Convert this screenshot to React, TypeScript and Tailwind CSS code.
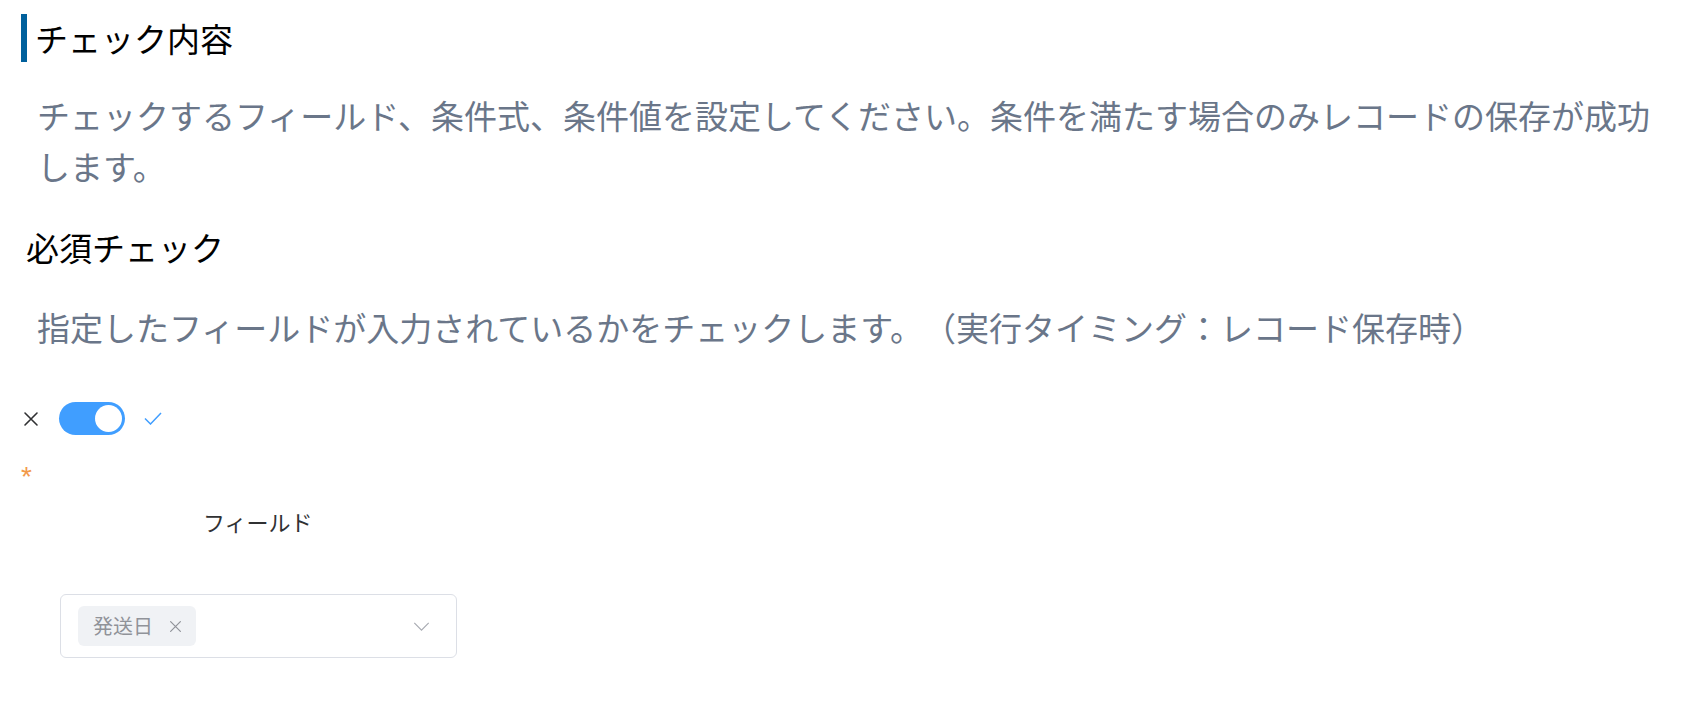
import React from "react";

const jp = { fontFamily: '"Noto Sans CJK JP", "Noto Sans", sans-serif' };

function CloseIcon({ className, width = 1.4 }: { className?: string; width?: number }) {
  return (
    <svg viewBox="0 0 16 16" className={className} fill="none" stroke="currentColor" strokeWidth={width} strokeLinecap="round">
      <path d="M2 2 L14 14 M14 2 L2 14" />
    </svg>
  );
}

function Toggle() {
  return (
    <div className="flex items-center h-[33px]">
      <CloseIcon className="w-[16px] h-[16px] ml-[2px] text-[#303133]" width={1.6} />
      <button className="ml-[20px] w-[66px] h-[33px] rounded-full bg-[#409eff] flex items-center justify-end pr-[3px]">
        <span className="block w-[27px] h-[27px] rounded-full bg-white" />
      </button>
      <svg viewBox="0 0 18 13" className="ml-[19px] w-[18px] h-[13px]" fill="none" stroke="#409eff" strokeWidth={1.5}>
        <path d="M1 6.5 L6.5 12 L17 1" />
      </svg>
    </div>
  );
}

function FieldSelect() {
  return (
    <div className="ml-[39px] w-[397px] h-[64px] border border-[#dcdfe6] rounded-[6px] flex items-center pl-[17px] pr-[26px]">
      <span className="h-[40px] w-[118px] rounded-[6px] bg-[#f0f2f5] flex items-center pl-[15px] text-[#909399] text-[20px]">
        <span style={jp}>発送日</span>
        <CloseIcon className="ml-[16px] w-[13px] h-[13px] text-[#909399]" width={1.5} />
      </span>
      <svg viewBox="0 0 18 10" className="ml-auto w-[17px] h-[9px]" fill="none" stroke="#a8abb2" strokeWidth={1.3}>
        <path d="M1 1 L9 9 L17 1" />
      </svg>
    </div>
  );
}

export default function App() {
  return (
    <div className="min-h-screen bg-white pl-[21px] pr-[20px] pt-[14px] [text-spacing-trim:space-all]" style={jp}>
      <h2 className="border-l-[6px] border-[#00609c] pl-[8px] text-[33px] leading-[48px] text-black font-normal">
        チェック内容
      </h2>

      <p className="mt-[28px] ml-4 text-[33px] leading-[51px] text-[#6a7689]">
        チェックするフィールド、条件式、条件値を設定してください。条件を満たす場合のみレコードの保存が成功します。
      </p>

      <h3 className="mt-[31px] ml-[5px] text-[33px] leading-[48px] text-black font-normal">
        必須チェック
      </h3>

      <p className="mt-[31px] ml-4 text-[33px] leading-[51px] text-[#6a7689]">
        指定したフィールドが入力されているかをチェックします。（実行タイミング：レコード保存時）
      </p>

      <div className="mt-[49px]">
        <Toggle />
      </div>

      <div className="mt-[27px] h-[30px] text-[28px] leading-[30px] text-[#f2994a]" style={{ fontFamily: '"Liberation Sans", sans-serif' }}>
        *
      </div>

      <div className="mt-[13px] ml-[182px] text-[22px] leading-[33px] text-[#303133]">フィールド</div>

      <div className="mt-[56px]">
        <FieldSelect />
      </div>
    </div>
  );
}
